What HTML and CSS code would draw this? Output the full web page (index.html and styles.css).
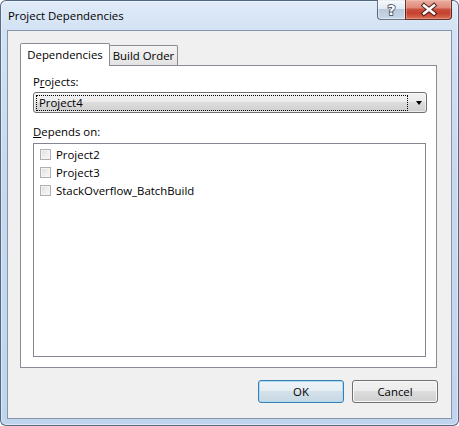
FILE: index.html
```html
<!DOCTYPE html>
<html>
<head>
<meta charset="utf-8">
<link rel="stylesheet" href="styles.css">
</head>
<body>
<div class="window">
  <div class="titlebar">
    <span class="title">Project Dependencies</span>
    <div class="caption">
      <div class="cap-btn help">
        <svg width="27" height="19" viewBox="0 0 27 19"><text x="13.5" y="15" text-anchor="middle" class="qmark">?</text></svg>
      </div>
      <div class="cap-btn close">
        <svg width="46" height="19" viewBox="0 0 46 19">
          <path d="M18 5.5 L28 13.5 M28 5.5 L18 13.5" class="x-out"/>
          <path d="M18 5.5 L28 13.5 M28 5.5 L18 13.5" class="x-in"/>
        </svg>
      </div>
    </div>
  </div>
  <div class="client">
    <div class="tabctl">
      <div class="tabstrip">
        <div class="tab active">Dependencies</div>
        <div class="tab">Build Order</div>
      </div>
      <div class="panel">
        <div class="label label-projects">P<u>r</u>ojects:</div>
        <div class="combo">
          <div class="combo-focus">Project4</div>
          <div class="combo-arrow"><span class="tri"></span></div>
        </div>
        <div class="label label-depends"><u>D</u>epends on:</div>
        <div class="listbox">
          <div class="item"><span class="check"></span>Project2</div>
          <div class="item"><span class="check"></span>Project3</div>
          <div class="item"><span class="check"></span>StackOverflow_BatchBuild</div>
        </div>
      </div>
    </div>
    <div class="buttons">
      <button class="btn default">OK</button>
      <button class="btn">Cancel</button>
    </div>
  </div>
</div>
</body>
</html>
```

FILE: styles.css
```css
html, body {
  margin: 0;
  padding: 0;
}
body {
  width: 459px;
  height: 426px;
  overflow: hidden;
  background: #ffffff;
  font-family: "Open Sans", "Noto Sans", sans-serif;
  font-size: 11.4px;
  color: #000;
}
.window {
  box-sizing: border-box;
  width: 459px;
  height: 426px;
  border: 1px solid rgba(45, 65, 95, 0.75);
  border-radius: 6px;
  background: linear-gradient(180deg, #e0ebf8 0%, #d2e2f4 7%, #c6d9ef 40%, #c0d5ed 100%);
  box-shadow: inset 0 0 0 1px rgba(255, 255, 255, 0.45);
  display: flex;
  flex-direction: column;
}
.titlebar {
  height: 29px;
  display: flex;
  flex-shrink: 0;
}
.title {
  padding: 7px 0 0 7px;
  line-height: 15px;
  height: 15px;
  color: #000;
}
.caption {
  margin-left: auto;
  margin-right: 6px;
  margin-top: -1px;
  display: flex;
  align-self: flex-start;
  height: 20px;
}
.cap-btn {
  box-sizing: border-box;
  height: 20px;
  border: 1px solid rgba(50, 60, 80, 0.7);
  border-top: none;
}
.cap-btn svg {
  display: block;
}
.help {
  width: 28px;
  border-right: none;
  border-radius: 0 0 0 4px;
  background: linear-gradient(180deg, rgba(255,255,255,0.8) 0%, rgba(225,234,244,0.75) 45%, rgba(176,194,214,0.8) 50%, rgba(196,212,228,0.8) 100%);
  box-shadow: inset 0 0 0 1px rgba(255,255,255,0.45);
}
.qmark {
  font-family: "DejaVu Sans", sans-serif;
  font-size: 14px;
  font-weight: bold;
  fill: #ffffff;
  stroke: #3d4450;
  stroke-width: 1.6px;
  paint-order: stroke;
}
.close {
  width: 47px;
  border-color: rgba(70, 25, 20, 0.8);
  border-radius: 0 0 4px 0;
  background: linear-gradient(180deg, #eab0a3 0%, #de8a78 40%, #c9503e 50%, #c6402f 70%, #da7358 100%);
  box-shadow: inset 0 0 0 1px rgba(255,200,190,0.35);
}
.x-out {
  stroke: rgba(60, 20, 15, 0.85);
  stroke-width: 4.6;
  stroke-linecap: square;
  fill: none;
}
.x-in {
  stroke: #ffffff;
  stroke-width: 2.6;
  stroke-linecap: square;
  fill: none;
}
.client {
  flex: 1;
  margin: 0 6px 6px 6px;
  border: 1px solid #8596ab;
  background: #f0f0f0;
  display: flex;
  flex-direction: column;
}
.tabctl {
  margin: 12px 14px 0 12px;
  display: flex;
  flex-direction: column;
}
.tabstrip {
  height: 22px;
  display: flex;
  align-items: flex-end;
}
.tab {
  box-sizing: border-box;
  height: 20px;
  width: 69px;
  margin-left: -1px;
  border: 1px solid #898c95;
  border-bottom: none;
  border-radius: 2px 2px 0 0;
  background: linear-gradient(180deg, #f4f4f4 0%, #ececec 50%, #e2e2e2 100%);
  text-align: center;
  line-height: 15px;
  padding-top: 2px;
}
.tab.active {
  position: relative;
  z-index: 1;
  width: 90px;
  height: 23px;
  margin-left: 0;
  margin-bottom: -1px;
  background: #ffffff;
  padding-top: 3px;
}
.panel {
  box-sizing: border-box;
  height: 303px;
  border: 1px solid #898c95;
  background: #ffffff;
  padding: 8px 9px 10px 12px;
  display: flex;
  flex-direction: column;
}
.label {
  height: 15px;
  line-height: 15px;
}
.label-projects {
  margin-bottom: 3px;
}
.label-depends {
  margin-top: 11px;
  margin-bottom: 4px;
}
.combo {
  box-sizing: border-box;
  height: 21px;
  border: 1px solid #707070;
  border-radius: 3px;
  background: linear-gradient(180deg, #f2f2f2 0%, #ebebeb 50%, #dddddd 50%, #cfcfcf 100%);
  box-shadow: inset 0 0 0 1px rgba(255,255,255,0.6);
  display: flex;
  align-items: center;
}
.combo-focus {
  box-sizing: border-box;
  flex: 1;
  height: 16px;
  margin-left: 2px;
  margin-top: 1px;
  border: 1px dotted #000;
  line-height: 14px;
  padding-left: 2px;
}
.combo-arrow {
  width: 18px;
  padding-left: 3px;
  box-sizing: border-box;
  display: flex;
  justify-content: center;
  align-items: center;
}
.tri {
  width: 0;
  height: 0;
  border-left: 3.5px solid transparent;
  border-right: 3.5px solid transparent;
  border-top: 4px solid #000;
  margin-top: 1px;
}
.listbox {
  flex: 1;
  margin-right: 1px;
  border: 1px solid #828790;
  padding-top: 1px;
}
.item {
  height: 18px;
  display: flex;
  align-items: center;
  padding-left: 6px;
  line-height: 15px;
}
.check {
  box-sizing: border-box;
  width: 11px;
  height: 11px;
  margin-right: 5px;
  border: 1px solid #b0b0b0;
  background: linear-gradient(135deg, #dcdcdc 0%, #eeeeee 55%, #f8f8f8 100%);
  box-shadow: inset 0 0 0 1px #f4f4f4;
}
.buttons {
  display: flex;
  justify-content: flex-end;
  gap: 8px;
  margin: 12px 13px 0 0;
}
.btn {
  box-sizing: border-box;
  width: 86px;
  height: 23px;
  padding: 0;
  border: 1px solid #707070;
  border-radius: 3px;
  background: linear-gradient(180deg, #f2f2f2 0%, #ebebeb 50%, #dddddd 50%, #cfcfcf 100%);
  box-shadow: inset 0 0 0 1px #fafafa;
  font-family: inherit;
  font-size: 11.4px;
  color: #000;
  line-height: 15px;
}
.btn.default {
  border-color: #3c7fb1;
  background: linear-gradient(180deg, #eef4f8 0%, #e4edf3 50%, #d3e1ea 50%, #c7d8e4 100%);
  box-shadow: inset 0 0 0 1px #a9dcf4;
}
```
